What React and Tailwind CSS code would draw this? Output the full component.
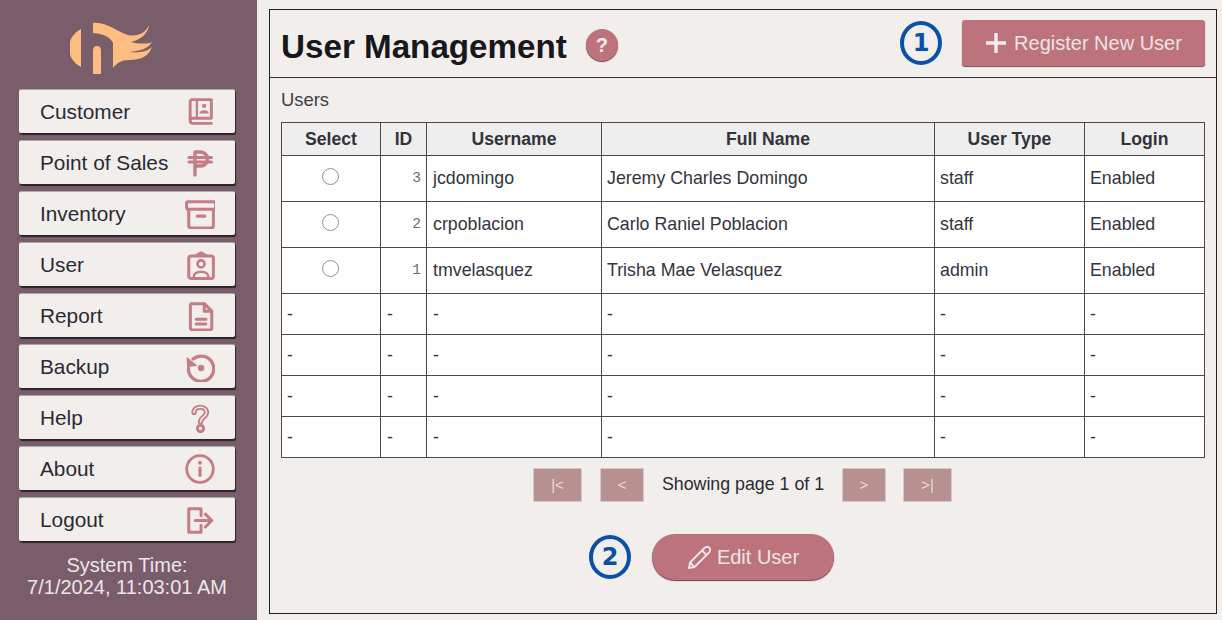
const C = "#c47c85";
const Ico = ({ children, size = 28, sw = 3 }) => (
  <svg width={size} height={size} viewBox="0 0 28 28" fill="none" stroke={C} strokeWidth={sw} strokeLinecap="round" strokeLinejoin="round">{children}</svg>
);

const icons = {
  Customer: (
    <Ico size={29}>
      <path d="M4 23V4.500A2 2 0 0 1 6 2.500H24.500V20.500H6.500A2.500 2.500 0 0 0 4 23A2.500 2.500 0 0 0 6.500 25.500H24.500" strokeWidth="2.800" />
      <path d="M10.500 3V20" strokeWidth="2.200" />
      <circle cx="17.500" cy="8.500" r="2.100" fill={C} stroke="none" />
      <path d="M13 16C13 11.800 22 11.800 22 16Z" fill={C} stroke="none" />
    </Ico>
  ),
  "Point of Sales": (
    <Ico size={28} sw={3.400}>
      <path d="M9 26V3H14.500A7 7 0 0 1 14.500 17H9" />
      <path d="M3 8.500H25.500M3 13H25.500" strokeWidth="3" />
    </Ico>
  ),
  Inventory: (
    <Ico size={30} sw={2.800}>
      <rect x="1.500" y="2.500" width="27" height="7" rx="1.500" />
      <path d="M3.500 10V25A2 2 0 0 0 5.500 27H24.500A2 2 0 0 0 26.500 25V10" />
      <path d="M11.500 16H18.500" strokeWidth="3" />
    </Ico>
  ),
  User: (
    <Ico size={30} sw={2.800}>
      <rect x="3.500" y="5.500" width="23" height="21" rx="2" />
      <path d="M11 5L15 2.500L19 5" />
      <circle cx="15" cy="13" r="3.300" strokeWidth="2.400" />
      <path d="M8 25.500C8 18.500 22 18.500 22 25.500" strokeWidth="2.400" />
    </Ico>
  ),
  Report: (
    <Ico size={30} sw={2.800}>
      <path d="M6 2.500H18L25 9.500V25A2 2 0 0 1 23 27H7A2 2 0 0 1 5 25V3.500Z" />
      <path d="M18 3V9.500H24.500" />
      <path d="M10.500 17H19.500M10.500 21.500H19.500" />
    </Ico>
  ),
  Backup: (
    <Ico size={30} sw={3}>
      <path d="M7.500 6.500A11.800 11.800 0 1 1 3.200 15" />
      <path d="M2 5.500L2.500 13.500L10.500 12.500Z" fill={C} stroke={C} strokeWidth="1" />
      <circle cx="15" cy="15" r="3" fill={C} stroke="none" />
    </Ico>
  ),
  Help: (
    <svg width="30" height="30" viewBox="0 0 30 30" fill="none" strokeLinecap="round" strokeLinejoin="round">
      <g stroke={C} strokeWidth="5.200">
        <path d="M9 9.500C9 2.500 21.500 2.500 21.500 9.500C21.500 14 15.500 14 15.500 19" />
        <circle cx="15.500" cy="25.500" r="2" />
      </g>
      <g stroke="#f2eeec" strokeWidth="1.600">
        <path d="M9 9.500C9 2.500 21.500 2.500 21.500 9.500C21.500 14 15.500 14 15.500 19" />
        <circle cx="15.500" cy="25.500" r="1" fill="#f2eeec" />
      </g>
    </svg>
  ),
  About: (
    <Ico size={30} sw={2.600}>
      <circle cx="14" cy="14" r="12.400" />
      <path d="M14 13V20" strokeWidth="2.900" />
      <circle cx="14" cy="8.200" r="1.800" fill={C} stroke="none" />
    </Ico>
  ),
  Logout: (
    <Ico size={30} sw={2.800}>
      <path d="M15 10V3.500H3.500V25.500H15V19" />
      <path d="M9.500 14.500H23" />
      <path d="M19 8.500L25 14.500L19 20.500" />
    </Ico>
  ),
};

const menu = ["Customer", "Point of Sales", "Inventory", "User", "Report", "Backup", "Help", "About", "Logout"];

const Mark = ({ n }) => (
  <div className="w-[42px] h-[44px] rounded-[50%] border-[4px] border-[#0a4fa8] flex items-center justify-center text-[#0a4fa8] text-[24px] font-bold leading-none" style={{ fontFamily: '"DejaVu Sans", sans-serif' }}>{n}</div>
);

const rows = [
  ["3", "jcdomingo", "Jeremy Charles Domingo", "staff"],
  ["2", "crpoblacion", "Carlo Raniel Poblacion", "staff"],
  ["1", "tmvelasquez", "Trisha Mae Velasquez", "admin"],
];

const PageBtn = ({ w, children }) => (
  <div className={`${w} h-[34px] bg-[#b79190] border border-[#d8c8c8] flex items-center justify-center text-[#e9dcdc] text-[15px]`}>{children}</div>
);

const heads = ["Select", "ID", "Username", "Full Name", "User Type", "Login"];

export default function App() {
  return (
    <div className="w-[1222px] h-[620px] flex bg-[#f2eeec] overflow-hidden text-[#2b2b33]" style={{ fontFamily: '"Liberation Sans", Arial, sans-serif' }}>
      <aside className="w-[257px] h-full bg-[#7a5d6a] flex flex-col pl-[19px] pt-[22px] shrink-0">
        <svg width="84" height="54" viewBox="69 22 84 54" className="ml-[51px]" fill="#fdbd80">
          <path d="M80 29A21 21 0 0 0 80 67Z" />
          <path d="M92 51Q92 46 96 46Q100 46 100 51V74H92Z" />
          <path d="M92 23C104 21 117 32 127 35C136 37 145 33 148 25C147 33 141 39 130 42C138 44 147 44 151 42C148 48 140 51 128 52C136 53 146 52 151 47C148 55 142 60 128 60C120 60 116 63 112 68V43C110 38 104 34 92 33Z" />
        </svg>
        <nav className="mt-[13px] w-[216px] flex flex-col gap-[7px]">
          {menu.map((m) => (
            <div key={m} className="h-[44px] bg-[#f2eeec] rounded-[2px] border-t border-t-[#aaa] shadow-[1px_2px_1px_#2c2327] flex items-center justify-between pl-[21px] pr-[20px] text-[20.800px] text-[#2a2a33]">
              <span>{m}</span>
              <span className="w-[30px] flex justify-center">{icons[m]}</span>
            </div>
          ))}
        </nav>
        <div className="mt-[13px] w-[216px] text-center text-[20px] leading-[22px] text-[#ebe6ec]">
          <div>System Time:</div>
          <div>7/1/2024, 11:03:01 AM</div>
        </div>
      </aside>

      <main className="w-[965px] pl-[12px] pr-[5px] pt-[9px] pb-[6px]">
        <div className="h-[605px] border border-[#222] flex flex-col">
          <header className="h-[68px] shrink-0 border-b border-b-[#333] flex items-center pl-[11px] pr-[11px]">
            <h1 className="text-[33.200px] font-bold text-[#17171c] leading-none pt-[6px]">User Management</h1>
            <div className="ml-[19px] mt-[2px] w-[32px] h-[32px] rounded-full bg-[#bd737c] shadow-[0_1px_1px_#6b4a4f] flex items-center justify-center text-[#f6eeee] font-bold text-[20px]">?</div>
            <div className="ml-auto mr-[20px] -mt-[1px]"><Mark n="1" /></div>
            <div className="w-[243px] h-[46px] -mt-[1px] bg-[#bd737c] rounded-[3px] shadow-[0_1px_1px_#7c4e54] flex items-center justify-center gap-[7px] text-[20px] text-[#f0e4e6]">
              <svg width="22" height="22" viewBox="0 0 22 22" stroke="#f6eeee" strokeWidth="3.400"><path d="M11 1V21M1 11H21" /></svg>
              <span>Register New User</span>
            </div>
          </header>

          <div className="flex-1 flex flex-col px-[11px]">
            <div className="mt-[11px] text-[18.400px] leading-[22px] text-[#3f3f44]">Users</div>
            <table className="mt-[11px] w-[923px] table-fixed border-collapse text-[17.800px] text-[#34343c]">
              <colgroup>
                <col className="w-[99px]" />
                <col className="w-[46px]" />
                <col className="w-[175px]" />
                <col className="w-[333px]" />
                <col className="w-[150px]" />
                <col className="w-[120px]" />
              </colgroup>
              <thead>
                <tr className="h-[33px] bg-[#eeeeee]">
                  {heads.map((h) => (
                    <th key={h} className="border border-[#4a4a4a] text-center font-bold text-[17.600px] text-[#33333a] p-0">{h}</th>
                  ))}
                </tr>
              </thead>
              <tbody className="bg-white">
                {rows.map((r) => (
                  <tr key={r[0]} className="h-[46px]">
                    <td className="border border-[#4a4a4a] p-0">
                      <div className="w-[17px] h-[17px] rounded-full border-[1.500px] border-[#8e8e8e] bg-white ml-[40px] -mt-[5px]"></div>
                    </td>
                    <td className="border border-[#4a4a4a] pr-[5px] text-right text-[14.500px] text-[#6b6b6b]" style={{ fontFamily: '"Liberation Mono", monospace' }}>{r[0]}</td>
                    <td className="border border-[#4a4a4a] pl-[6px]">{r[1]}</td>
                    <td className="border border-[#4a4a4a] pl-[5px]">{r[2]}</td>
                    <td className="border border-[#4a4a4a] pl-[5px]">{r[3]}</td>
                    <td className="border border-[#4a4a4a] pl-[5px]">Enabled</td>
                  </tr>
                ))}
                {[0, 1, 2, 3].map((i) => (
                  <tr key={i} className="h-[41px]">
                    {[5, 6, 6, 5, 5, 5].map((p, j) => (
                      <td key={j} className={`border border-[#4a4a4a] ${p === 5 ? "pl-[5px]" : "pl-[6px]"}`}>-</td>
                    ))}
                  </tr>
                ))}
              </tbody>
            </table>

            <div className="mt-[10px] ml-[252px] flex items-center">
              <PageBtn w="w-[49px]">|&lt;</PageBtn>
              <div className="w-[18px]"></div>
              <PageBtn w="w-[44px]">&lt;</PageBtn>
              <div className="w-[198px] text-center text-[17.800px] -mt-[2px]">Showing page 1 of 1</div>
              <PageBtn w="w-[44px]">&gt;</PageBtn>
              <div className="w-[17px]"></div>
              <PageBtn w="w-[49px]">&gt;|</PageBtn>
            </div>

            <div className="mt-[32px] ml-[308px] flex items-center gap-[21px]">
              <Mark n="2" />
              <div className="w-[182px] h-[46px] rounded-full bg-[#bd737c] shadow-[0_1px_1px_#6b4045] flex items-center justify-center gap-[5px] text-[20px] text-[#f0e4e6]">
                <svg width="25" height="25" viewBox="0 0 25 25" fill="none" stroke="#f3e8ea" strokeWidth="1.800" strokeLinejoin="round"><path d="M2 23L3 17.500L17.500 3C19 1.500 21 1.500 22.500 3C23.500 4.500 23.500 6 22 7.500L7.500 22Z" /><path d="M15 5.500L20 10.500M3 17.500L7.500 22" /></svg>
                <span>Edit User</span>
              </div>
            </div>
          </div>
        </div>
      </main>
    </div>
  );
}
